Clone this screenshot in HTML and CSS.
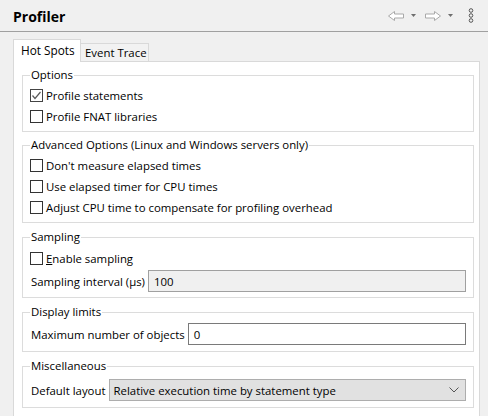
FILE: index.html
```html
<!DOCTYPE html>
<html>
<head>
<meta charset="utf-8">
<link rel="stylesheet" href="styles.css">
</head>
<body>
<div class="header">
  <div class="title">Profiler</div>
  <div class="tools">
    <svg class="arrow" width="16" height="10" viewBox="0 0 16 10"><polygon points="0.5,5 6.5,0.5 6.5,3 15.5,3 15.5,7 6.5,7 6.5,9.5" fill="#fff" stroke="#a9a9a9" stroke-width="1"/></svg>
    <svg class="drop" width="5" height="3" viewBox="0 0 5 3"><polygon points="0,0 5,0 2.5,3" fill="#6e6e6e"/></svg>
    <svg class="arrow" width="16" height="10" viewBox="0 0 16 10"><polygon points="15.5,5 9.5,0.5 9.5,3 0.5,3 0.5,7 9.5,7 9.5,9.5" fill="#fff" stroke="#a9a9a9" stroke-width="1"/></svg>
    <svg class="drop" width="5" height="3" viewBox="0 0 5 3"><polygon points="0,0 5,0 2.5,3" fill="#6e6e6e"/></svg>
    <svg class="menu" width="6" height="15" viewBox="0 0 6 15"><circle cx="3" cy="2.5" r="1.8" fill="none" stroke="#555" stroke-width="1"/><circle cx="3" cy="7.5" r="1.8" fill="none" stroke="#555" stroke-width="1"/><circle cx="3" cy="12.5" r="1.8" fill="none" stroke="#555" stroke-width="1"/></svg>
  </div>
</div>
<div class="content">
  <div class="tabs">
    <div class="tab active">Hot Spots</div>
    <div class="tab">Event Trace</div>
  </div>
  <div class="panel">
    <fieldset class="group g-options">
      <legend>Options</legend>
      <div class="row check"><span class="box checked"><svg width="11" height="11" viewBox="0 0 11 11"><polyline points="1.5,5.5 4,8.5 9.5,2" fill="none" stroke="#5a5a5a" stroke-width="1.2"/></svg></span>Profile statements</div>
      <div class="row check"><span class="box"></span>Profile FNAT libraries</div>
    </fieldset>
    <fieldset class="group g-adv">
      <legend>Advanced Options (Linux and Windows servers only)</legend>
      <div class="row check"><span class="box"></span>Don't measure elapsed times</div>
      <div class="row check"><span class="box"></span>Use elapsed timer for CPU times</div>
      <div class="row check"><span class="box"></span>Adjust CPU time to compensate for profiling overhead</div>
    </fieldset>
    <fieldset class="group g-sampling">
      <legend>Sampling</legend>
      <div class="row check"><span class="box"></span><span><u>E</u>nable sampling</span></div>
      <div class="row field"><span class="lbl">Sampling interval (µs)</span><div class="input disabled">100</div></div>
    </fieldset>
    <fieldset class="group g-display">
      <legend>Display limits</legend>
      <div class="row field"><span class="lbl">Maximum number of objects</span><div class="input">0</div></div>
    </fieldset>
    <fieldset class="group g-misc">
      <legend>Miscellaneous</legend>
      <div class="row field"><span class="lbl">Default layout</span><div class="select"><span>Relative execution time by statement type</span><svg width="10" height="6" viewBox="0 0 10 6"><polyline points="0.5,0.5 5,5 9.5,0.5" fill="none" stroke="#555" stroke-width="1"/></svg></div></div>
    </fieldset>
  </div>
</div>
</body>
</html>
```
FILE: styles.css
```css
html, body {
  margin: 0;
  padding: 0;
}
body {
  background: #f0f0f0;
  font-family: "Open Sans", "Liberation Sans", sans-serif;
  font-size: 11.4px;
  color: #000;
  width: 488px;
  height: 416px;
  overflow: hidden;
}
.header {
  height: 31px;
  border-bottom: 1px solid #a0a0a0;
  display: flex;
  align-items: center;
  justify-content: space-between;
  padding: 0 14px 0 13px;
}
.title {
  font-size: 14px;
  font-weight: 700;
  padding-top: 1px;
}
.tools {
  display: flex;
  align-items: center;
}
.tools .arrow { margin-left: 6px; }
.tools .drop { margin-left: 7px; margin-right: 3px; }
.tools .menu { margin-left: 12px; }
.content {
  padding: 7px 8px 0 13px;
}
.tabs {
  display: flex;
  align-items: flex-end;
  height: 22px;
  position: relative;
  z-index: 1;
}
.tab {
  border: 1px solid #d9d9d9;
  border-bottom: none;
  box-sizing: border-box;
}
.tab.active {
  background: #fff;
  height: 23px;
  width: 68px;
  padding: 2px 0 0 7px;
  margin-bottom: -1px;
  font-size: 11.8px;
}
.tab:not(.active) {
  background: #f2f2f2;
  height: 18px;
  width: 68px;
  border-left: none;
  padding: 1px 0 0 4px;
}
.panel {
  background: #fff;
  border: 1px solid #d9d9d9;
  height: 356px;
  padding: 5px 5px 0 8px;
  box-sizing: border-box;
}
.group {
  border: 1px solid #dcdcdc;
  margin: 0 0 6px 0;
  padding: 2px 7px 3px 7px;
  min-width: 0;
}
.group legend {
  padding: 0 1px;
  line-height: 16px;
  height: 16px;
}
.g-options { margin-bottom: 5px; padding-bottom: 4px; }
.g-adv { padding-bottom: 4px; }
.g-sampling { padding-bottom: 4px; padding-top: 3px; }
.g-display { padding-top: 2px; padding-bottom: 5px; }
.g-misc { padding-top: 4px; padding-bottom: 5px; }
.row {
  display: flex;
  align-items: center;
}
.row.check {
  height: 21px;
}
.box {
  width: 13px;
  height: 13px;
  box-sizing: border-box;
  border: 1px solid #333;
  background: #fff;
  margin-right: 3px;
  display: flex;
  align-items: center;
  justify-content: center;
}
.box.checked {
  border-color: #444;
}
.box svg { display: block; }
.row.field {
  height: 24px;
}
.lbl {
  white-space: nowrap;
  margin-right: 3px;
  margin-left: 1px;
}
.input {
  flex: 1;
  height: 22px;
  box-sizing: border-box;
  border: 1px solid #7a7a7a;
  background: #fff;
  padding: 0 0 0 5px;
  display: flex;
  align-items: center;
}
.input.disabled {
  background: #f0f0f0;
  border-color: #a0a0a0;
}
.select {
  flex: 1;
  height: 22px;
  box-sizing: border-box;
  border: 1px solid #adadad;
  background: #e1e1e1;
  display: flex;
  align-items: center;
  justify-content: space-between;
  padding: 0 6px 0 4px;
}
.select svg { display: block; }
```
